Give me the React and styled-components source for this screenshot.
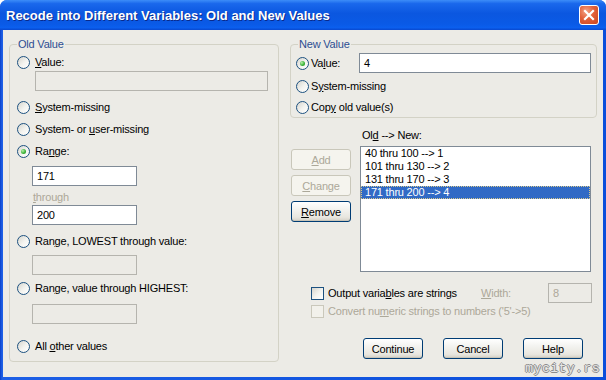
import styled, { createGlobalStyle } from "styled-components";

const GlobalStyle = createGlobalStyle`
  html, body {
    margin: 0;
    padding: 0;
    background: #ffffff;
  }
  body {
    font-family: "Liberation Sans", Arial, sans-serif;
    font-size: 11px;
    letter-spacing: -0.2px;
  }
  * {
    box-sizing: border-box;
  }
  u {
    text-decoration-thickness: 1px;
    text-underline-offset: 1px;
  }
`;

const Window = styled.div`
  position: relative;
  width: 606px;
  height: 380px;
  display: flex;
  flex-direction: column;
  background: linear-gradient(to right, #0A3FC8 0px, #1D5FE6 2px, #0A4EDB 100%);
  border-radius: 7px 7px 0 0;
  overflow: hidden;
`;

const TitleBar = styled.div`
  height: 30px;
  flex-shrink: 0;
  display: flex;
  align-items: center;
  justify-content: space-between;
  padding: 0 7px 0 6px;
  background: linear-gradient(
    to bottom,
    #3C8DF8 0%,
    #1A68EC 12%,
    #0B57E0 45%,
    #0A5AE6 80%,
    #0B5FEE 92%,
    #0848D0 100%
  );
`;

const Title = styled.span`
  color: #ffffff;
  font: bold 13px "Liberation Sans", Arial, sans-serif;
  letter-spacing: 0;
  text-shadow: 1px 1px 0 #0A2A8A;
`;

const CloseButton = styled.div`
  width: 20px;
  height: 20px;
  border: 1px solid #ffffff;
  border-radius: 3px;
  background: radial-gradient(circle at 35% 30%, #F3A386 0%, #E2603A 45%, #C9461F 100%);
  display: flex;
  align-items: center;
  justify-content: center;
`;

const Body = styled.div`
  flex: 1;
  margin: 0 3px 3px;
  background: #ECEBE6;
  display: grid;
  grid-template-columns: 270px 307px;
  column-gap: 11px;
  align-items: start;
  padding: 8px 6px 0;
`;

const Group = styled.fieldset`
  margin: 0;
  padding: 0;
  min-width: 0;
  border: 1px solid #D3D2C6;
  border-radius: 4px;
`;

const Legend = styled.legend`
  margin-left: 7px;
  padding: 0 1px;
  line-height: 13px;
  color: #2D4E92;
`;

const GroupBody = styled.div`
  display: flex;
  flex-direction: column;
  padding: 0 ${(p) => p.$px}px ${(p) => p.$pb}px;
`;

const Option = styled.div`
  display: flex;
  align-items: center;
  gap: ${(p) => p.$gap ?? 4}px;
  height: ${(p) => p.$h ?? 16}px;
  margin-top: ${(p) => p.$mt ?? 0}px;
  padding-left: ${(p) => p.$pl ?? 0}px;
  padding-right: ${(p) => p.$pr ?? 0}px;
  color: ${(p) => (p.$disabled ? "#ACA899" : "#000000")};
  white-space: nowrap;
`;

const Radio = styled.span`
  width: 13px;
  height: 13px;
  flex-shrink: 0;
  border: 1px solid #1C5180;
  border-radius: 50%;
  background: linear-gradient(135deg, #D6D5CE 0%, #F4F4F0 55%, #FFFFFF 100%);
  display: flex;
  align-items: center;
  justify-content: center;

  &::after {
    content: "";
    display: ${(p) => (p.$checked ? "block" : "none")};
    width: 5px;
    height: 5px;
    border-radius: 50%;
    background: radial-gradient(circle at 35% 35%, #B8F0AA 0%, #3DB43A 55%, #1E8A1E 100%);
  }
`;

const Checkbox = styled.span`
  width: 13px;
  height: 13px;
  flex-shrink: 0;
  border: 1px solid ${(p) => (p.$disabled ? "#CAC8BB" : "#1C5180")};
  background: ${(p) =>
    p.$disabled ? "#F2F1EB" : "linear-gradient(135deg, #D6D5CE 0%, #F4F4F0 55%, #FFFFFF 100%)"};
`;

const Field = styled.div`
  width: ${(p) => p.$w}px;
  height: 20px;
  flex-shrink: 0;
  margin-top: ${(p) => p.$mt ?? 0}px;
  margin-left: ${(p) => (p.$push ? "auto" : `${p.$ml ?? 0}px`)};
  padding: 0 4px;
  display: flex;
  align-items: center;
  border: 1px solid ${(p) => (p.$disabled ? "#B5B4AE" : "#7F8A96")};
  background: ${(p) => (p.$disabled ? "transparent" : "#ffffff")};
  color: ${(p) => (p.$disabled ? "#ACA899" : "#000000")};
`;

const Caption = styled.div`
  line-height: ${(p) => p.$lh ?? 13}px;
  margin-top: ${(p) => p.$mt ?? 0}px;
  margin-left: ${(p) => (p.$push ? "auto" : `${p.$ml ?? 0}px`)};
  width: ${(p) => (p.$w ? `${p.$w}px` : "auto")};
  color: ${(p) => (p.$disabled ? "#ACA899" : "#000000")};
`;

const RightColumn = styled.div`
  display: flex;
  flex-direction: column;
`;

const ListArea = styled.div`
  display: flex;
  align-items: flex-start;
  margin-top: 11px;
`;

const ButtonStack = styled.div`
  display: flex;
  flex-direction: column;
  gap: 5px;
  margin: 20px 0 0 1px;
`;

const ListColumn = styled.div`
  width: 231px;
  margin-left: 9px;
`;

const ListBox = styled.div`
  height: 126px;
  margin-top: 4px;
  border: 1px solid #7F8A96;
  background: #ffffff;
`;

const ListItem = styled.div`
  height: 13px;
  line-height: 13px;
  padding-left: 4px;
  color: ${(p) => (p.$selected ? "#ffffff" : "#000000")};
  background: ${(p) => (p.$selected ? "#316AC5" : "transparent")};
  outline: ${(p) => (p.$selected ? "1px dotted #D9C98A" : "none")};
  outline-offset: -1px;
`;

const Button = styled.button`
  width: 60px;
  height: 21px;
  padding: 0;
  font: 11px "Liberation Sans", Arial, sans-serif;
  letter-spacing: -0.2px;
  color: ${(p) => (p.disabled ? "#ACA899" : "#000000")};
  border: 1px solid ${(p) => (p.disabled ? "#C9C7BA" : "#003C74")};
  border-radius: 3px;
  background: ${(p) =>
    p.disabled
      ? "#F5F4EE"
      : "linear-gradient(to bottom, #FFFFFF 0%, #F4F4F1 35%, #E8E6DF 80%, #D4D0C6 100%)"};
  box-shadow: ${(p) => (p.disabled ? "none" : "inset 0 -1px 0 #C8C4B8")};
`;

const DialogButtons = styled.div`
  display: flex;
  justify-content: flex-end;
  gap: 20px;
  margin-top: 19px;
  padding-right: 14px;
`;

const Watermark = styled.div`
  position: absolute;
  right: 6px;
  bottom: 4px;
  font: 13px "Liberation Mono", "DejaVu Sans Mono", monospace;
  letter-spacing: 0.5px;
  color: #E6E6E6;
  text-shadow: -1px 0 #8C8C8C, 1px 0 #8C8C8C, 0 -1px #8C8C8C, 0 1px #8C8C8C;
`;

const rules = [
  "40 thru 100 --> 1",
  "101 thru 130 --> 2",
  "131 thru 170 --> 3",
  "171 thru 200 --> 4",
];

export default function App() {
  return (
    <>
      <GlobalStyle />
      <Window>
        <TitleBar>
          <Title>Recode into Different Variables: Old and New Values</Title>
          <CloseButton>
            <svg width="12" height="12" viewBox="0 0 12 12">
              <path d="M2 2 L10 10 M10 2 L2 10" stroke="#ffffff" strokeWidth="2.2" strokeLinecap="square" />
            </svg>
          </CloseButton>
        </TitleBar>

        <Body>
          <Group>
            <Legend>Old Value</Legend>
            <GroupBody $px={7} $pb={7}>
              <Option $mt={3} $gap={5}>
                <Radio />
                <span><u>V</u>alue:</span>
              </Option>
              <Field $disabled $w={233} $ml={18} $mt={1} />
              <Option $mt={8} $gap={5}>
                <Radio />
                <span><u>S</u>ystem-missing</span>
              </Option>
              <Option $mt={6} $gap={5}>
                <Radio />
                <span>System- or <u>u</u>ser-missing</span>
              </Option>
              <Option $mt={6} $gap={5}>
                <Radio $checked />
                <span>Ra<u>n</u>ge:</span>
              </Option>
              <Field $w={105} $ml={15} $mt={7}>171</Field>
              <Caption $disabled $ml={16} $mt={5} $lh={12}>
                <u>t</u>hrough
              </Caption>
              <Field $w={105} $ml={15} $mt={2}>200</Field>
              <Option $mt={8} $gap={5}>
                <Radio />
                <span>Ran<u>g</u>e, LOWEST through value:</span>
              </Option>
              <Field $disabled $w={105} $ml={15} $mt={6} />
              <Option $mt={5} $gap={5}>
                <Radio />
                <span>Ran<u>g</u>e, value through HIGHEST:</span>
              </Option>
              <Field $disabled $w={105} $ml={15} $mt={8} />
              <Option $mt={14} $gap={5}>
                <Radio />
                <span>All <u>o</u>ther values</span>
              </Option>
            </GroupBody>
          </Group>

          <RightColumn>
            <Group>
              <Legend>New Value</Legend>
              <GroupBody $px={5} $pb={2}>
                <Option $h={20} $mt={2} $gap={2}>
                  <Radio $checked />
                  <span>Va<u>l</u>ue:</span>
                  <Field $w={232} $push>4</Field>
                </Option>
                <Option $mt={5} $gap={2}>
                  <Radio />
                  <span>S<u>y</u>stem-missing</span>
                </Option>
                <Option $mt={5} $gap={2}>
                  <Radio />
                  <span>Cop<u>y</u> old value(s)</span>
                </Option>
              </GroupBody>
            </Group>

            <ListArea>
              <ButtonStack>
                <Button disabled><u>A</u>dd</Button>
                <Button disabled><u>C</u>hange</Button>
                <Button><u>R</u>emove</Button>
              </ButtonStack>
              <ListColumn>
                <Caption $ml={2}>Ol<u>d</u> --&gt; New:</Caption>
                <ListBox>
                  {rules.map((r, i) => (
                    <ListItem key={r} $selected={i === rules.length - 1}>{r}</ListItem>
                  ))}
                </ListBox>
              </ListColumn>
            </ListArea>

            <Option $h={20} $mt={11} $pl={21} $pr={5} $gap={4}>
              <Checkbox />
              <span>Output varia<u>b</u>les are strings</span>
              <Caption $disabled $w={63} $push>
                <u>W</u>idth:
              </Caption>
              <Field $disabled $w={44}>8</Field>
            </Option>
            <Option $disabled $pl={21} $gap={4}>
              <Checkbox $disabled />
              <span>Convert nu<u>m</u>eric strings to numbers ('5'-&gt;5)</span>
            </Option>

            <DialogButtons>
              <Button>Continue</Button>
              <Button>Cancel</Button>
              <Button>Help</Button>
            </DialogButtons>
          </RightColumn>
        </Body>
        <Watermark>mycity.rs</Watermark>
      </Window>
    </>
  );
}
